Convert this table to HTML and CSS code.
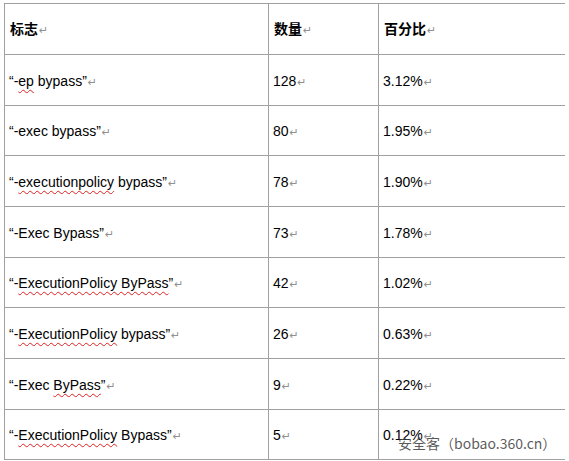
FILE: index.html
```html
<!DOCTYPE html>
<html>
<head>
<meta charset="utf-8">
<link rel="stylesheet" href="styles.css">
</head>
<body>
<div class="page">
  <div class="table">
    <div class="cell head"><span class="t">标志<span class="ret">↵</span></span></div>
    <div class="cell head"><span class="t">数量<span class="ret">↵</span></span></div>
    <div class="cell head last"><span class="t">百分比<span class="ret">↵</span></span></div>

    <div class="cell"><span class="t">“-<span class="sq">ep</span> bypass”<span class="ret">↵</span></span></div>
    <div class="cell"><span class="t">128<span class="ret">↵</span></span></div>
    <div class="cell last"><span class="t">3.12%<span class="ret">↵</span></span></div>

    <div class="cell"><span class="t">“-exec bypass”<span class="ret">↵</span></span></div>
    <div class="cell"><span class="t">80<span class="ret">↵</span></span></div>
    <div class="cell last"><span class="t">1.95%<span class="ret">↵</span></span></div>

    <div class="cell"><span class="t">“-<span class="sq">executionpolicy</span> bypass”<span class="ret">↵</span></span></div>
    <div class="cell"><span class="t">78<span class="ret">↵</span></span></div>
    <div class="cell last"><span class="t">1.90%<span class="ret">↵</span></span></div>

    <div class="cell"><span class="t">“-Exec Bypass”<span class="ret">↵</span></span></div>
    <div class="cell"><span class="t">73<span class="ret">↵</span></span></div>
    <div class="cell last"><span class="t">1.78%<span class="ret">↵</span></span></div>

    <div class="cell"><span class="t">“-<span class="sq">ExecutionPolicy ByPass</span>”<span class="ret">↵</span></span></div>
    <div class="cell"><span class="t">42<span class="ret">↵</span></span></div>
    <div class="cell last"><span class="t">1.02%<span class="ret">↵</span></span></div>

    <div class="cell"><span class="t">“-<span class="sq">ExecutionPolicy</span> bypass”<span class="ret">↵</span></span></div>
    <div class="cell"><span class="t">26<span class="ret">↵</span></span></div>
    <div class="cell last"><span class="t">0.63%<span class="ret">↵</span></span></div>

    <div class="cell"><span class="t">“-Exec <span class="sq">ByPass</span>”<span class="ret">↵</span></span></div>
    <div class="cell"><span class="t">9<span class="ret">↵</span></span></div>
    <div class="cell last"><span class="t">0.22%<span class="ret">↵</span></span></div>

    <div class="cell"><span class="t">“-<span class="sq">ExecutionPolicy</span> Bypass”<span class="ret">↵</span></span></div>
    <div class="cell"><span class="t">5<span class="ret">↵</span></span></div>
    <div class="cell last"><span class="t">0.12%<span class="ret">↵</span></span></div>
  </div>
  <div class="watermark">安全客（bobao.360.cn）</div>
</div>
</body>
</html>
```

FILE: styles.css
```css
html, body {
  margin: 0;
  padding: 0;
  background: #ffffff;
}
body {
  width: 569px;
  height: 461px;
  overflow: hidden;
  font-family: "Liberation Sans", Arial, "Noto Sans CJK SC", sans-serif;
  font-size: 14px;
  color: #000;
}
.page {
  position: relative;
  padding: 3px 0 0 4px;
}
.table {
  display: grid;
  width: 561px;
  grid-template-columns: 263px 109px 187px;
  grid-template-rows: 50px 50px 49px 50px 50px 49px 50px 50px 49px;
  gap: 1px;
  padding: 1px;
  background: #a0a0a0;
  box-sizing: border-box;
}
.cell {
  position: relative;
  background: #fff;
  display: flex;
  align-items: center;
  padding: 3px 0 0 4px;
  white-space: nowrap;
  line-height: 16px;
}
.head {
  font-family: "Noto Sans CJK SC", sans-serif;
  font-weight: 700;
  font-size: 14px;
  padding-left: 5px;
  padding-top: 1px;
}
.ret {
  font-family: "DejaVu Sans", sans-serif;
  font-weight: 400;
  font-size: 11px;
  color: #909090;
  margin-left: 1px;
}
.sq {
  text-decoration: underline wavy #e02020;
  text-decoration-thickness: 1px;
  text-underline-offset: 3px;
}
.last::after {
  content: "";
  position: absolute;
  right: -4px;
  top: 50%;
  width: 1px;
  height: 1px;
  background: #555;
}
.watermark {
  position: absolute;
  left: 398px;
  top: 434px;
  font-family: "Noto Sans CJK SC", sans-serif;
  font-size: 14px;
  line-height: 18px;
  color: rgba(60, 60, 60, 0.85);
  white-space: nowrap;
}
```
